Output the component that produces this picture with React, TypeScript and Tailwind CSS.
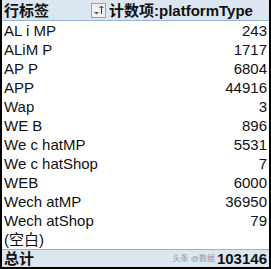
import React from "react";

const rows: [string, string][] = [
  ["AL i MP", "243"],
  ["ALiM P", "1717"],
  ["AP P", "6804"],
  ["APP", "44916"],
  ["Wap", "3"],
  ["WE B", "896"],
  ["We c hatMP", "5531"],
  ["We c hatShop", "7"],
  ["WEB", "6000"],
  ["Wech atMP", "36950"],
  ["Wech atShop", "79"],
  ["(空白)", ""],
];

export default function App() {
  return (
    <div
      className="w-[271px] h-[269px] bg-white border-l-2 border-r-2 border-b-2 border-black flex flex-col text-[#111] overflow-hidden"
      style={{ fontFamily: '"Liberation Sans", "Noto Sans CJK SC", sans-serif' }}
    >
      <div className="h-[21px] shrink-0 bg-[#dce6f1] border-b border-[#95b3d7] flex items-center font-bold text-[15px] leading-none">
        <div className="w-[89px] pl-[2px]">行标签</div>
        <div className="w-[15px] h-[15px] border border-[#a0a0a0] bg-[#f0f0f0] flex items-end justify-center relative mr-[3px]">
          <svg width="13" height="13" viewBox="0 0 13 13">
            <path d="M2 8 L7 8 L4.5 10.5 Z" fill="#555" />
            <path d="M9.5 2 L9.5 10" stroke="#333" strokeWidth="1" />
            <path d="M7.5 4 L9.5 2 L11.5 4" stroke="#333" strokeWidth="1" fill="none" />
          </svg>
        </div>
        <div className="flex-1 whitespace-nowrap">计数项:platformType</div>
      </div>
      <div className="flex flex-col">
        {rows.map(([k, v]) => (
          <div key={k} className="h-[19px] flex items-center text-[15px] leading-none">
            <div className="flex-1 pl-[2px] whitespace-pre">{k}</div>
            <div className="pr-[2px]">{v}</div>
          </div>
        ))}
      </div>
      <div className="flex-1 bg-[#dce6f1] border-t border-[#95b3d7] flex items-center font-bold text-[15px] leading-none">
        <div className="flex-1 pl-[2px]">总计</div>
        <div className="pr-[2px] flex items-center gap-[2px]">
          <span className="text-[8px] font-normal text-[#999]">头条 @数据</span>
          <span>103146</span>
        </div>
      </div>
    </div>
  );
}
